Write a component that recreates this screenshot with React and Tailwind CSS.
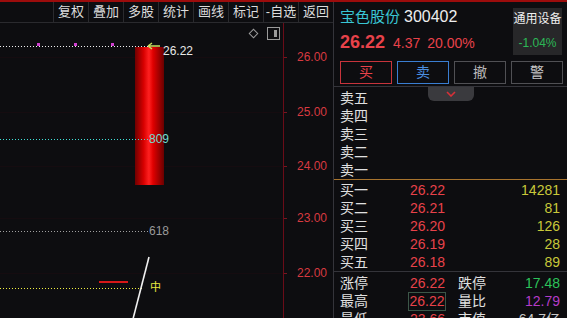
import React from 'react';

const tools = ['复权', '叠加', '多股', '统计', '画线', '标记', '-自选', '返回'];

const axis = [
    { label: '26.00', y: 34 },
    { label: '25.00', y: 89 },
    { label: '24.00', y: 143 },
    { label: '23.00', y: 195 },
    { label: '22.00', y: 250 },
];

const asks = ['卖五', '卖四', '卖三', '卖二', '卖一'];

const bids = [
    { label: '买一', price: '26.22', vol: '14281' },
    { label: '买二', price: '26.21', vol: '81' },
    { label: '买三', price: '26.20', vol: '126' },
    { label: '买四', price: '26.19', vol: '28' },
    { label: '买五', price: '26.18', vol: '89' },
];

const Chart = () => (
    <div className="relative flex-1 overflow-hidden">
        {axis.map((a) => (
            <React.Fragment key={a.label}>
                <div className="absolute left-0 w-[283px] h-px bg-[#150c10]" style={{ top: a.y }} />
                <div className="absolute left-[283px] w-[4px] h-px bg-[#7a1520]" style={{ top: a.y }} />
                <div className="absolute left-[297px] text-[12px] leading-[14px] text-[#d83a40]" style={{ top: a.y - 7 }}>
                    {a.label}
                </div>
            </React.Fragment>
        ))}
        <div className="absolute left-[283px] top-0 bottom-0 w-px bg-[#6a0c18]" />

        {/* tool icons */}
        <div className="absolute left-[250px] top-[7px] w-[7px] h-[7px] border border-[#9a9a9a] rotate-45" />
        <div className="absolute left-[267px] top-[4px] w-[13px] h-[13px] border border-[#9a9a9a] flex justify-end p-[2px]">
            <div className="w-[3px] h-full bg-[#9a9a9a]" />
        </div>

        {/* 26.22 level */}
        <div className="absolute left-0 top-[23px] w-[148px] h-px bg-[repeating-linear-gradient(to_right,#f0f0f0_0_1px,transparent_1px_3px)]" />
        {[37, 74, 111].map((x) => (
            <div key={x} className="absolute top-[20px] w-[3px] h-[3px] bg-[#d040d0]" style={{ left: x }} />
        ))}
        <div className="absolute left-[135px] top-[24px] w-[29px] h-[138px] bg-[linear-gradient(to_right,#700000,#d80000_30%,#ff2020_48%,#e00000_62%,#6a0000)]" />
        <svg className="absolute left-[147px] top-[19px]" width="14" height="8" viewBox="0 0 14 8">
            <path d="M1 4 L5 1 M1 4 L5 7 M1 4 H13" stroke="#c8e060" strokeWidth="1.4" fill="none" />
        </svg>
        <div className="absolute left-[163px] top-[21px] text-[12px] leading-[14px] text-[#e8e8e8]">26.22</div>

        {/* 809 */}
        <div className="absolute left-0 top-[116px] w-[148px] h-px bg-[repeating-linear-gradient(to_right,#40e0d8_0_1px,transparent_1px_3px)]" />
        <div className="absolute left-[149px] top-[109px] text-[12px] leading-[14px] text-[#70dcd0]">809</div>

        {/* 618 */}
        <div className="absolute left-0 top-[208px] w-[148px] h-px bg-[repeating-linear-gradient(to_right,#a0a0a0_0_1px,transparent_1px_3px)]" />
        <div className="absolute left-[149px] top-[201px] text-[12px] leading-[14px] text-[#9a9a9a]">618</div>

        {/* mid */}
        <div className="absolute left-[99px] top-[258px] w-[29px] h-[2px] bg-[#d81818]" />
        <div className="absolute left-0 top-[265px] w-[142px] h-px bg-[repeating-linear-gradient(to_right,#f0f040_0_1px,transparent_1px_3px)]" />
        <div className="absolute left-[150px] top-[257px] text-[11px] leading-[14px] text-[#e8e840]">中</div>
        <svg className="absolute left-0 top-0" width="283" height="295">
            <line x1="149" y1="234" x2="133" y2="296" stroke="#f0f0f0" strokeWidth="1.6" />
        </svg>
    </div>
);

const Row = ({ children, className = '' }) => (
    <div className={`flex items-center h-[18px] leading-[18px] ${className}`}>{children}</div>
);

const App = () => {
    return (
        <div
            className="w-[567px] h-[318px] bg-[#0d0d10] flex flex-col overflow-hidden text-[#e0e0e0]"
            style={{ fontFamily: '"Liberation Sans", "Noto Sans CJK SC", sans-serif' }}
        >
            <div className="h-[2px] bg-[#9c0c0c]" />
            <div className="flex flex-1 min-h-0">
                <div className="w-[333px] flex flex-col">
                    <div className="h-[21px] flex justify-end border-b border-[#2a2a2e]">
                        {tools.map((t) => (
                            <div key={t} className="w-[35px] flex items-center justify-center border-l border-[#2a2a2e] text-[13px] text-[#dcdcdc]">
                                {t}
                            </div>
                        ))}
                    </div>
                    <Chart />
                </div>

                <div className="relative flex-1 flex flex-col border-l border-[#34343a]">
                    <div className="pt-[3px] pb-[2px] border-b border-[#34343a]">
                        <div className="flex h-[50px]">
                            <div className="flex-1 pl-[6px]">
                                <div className="h-[24px] leading-[24px] flex items-baseline gap-[4px]">
                                    <span className="text-[15px] text-[#3ac6d4]">宝色股份</span>
                                    <span className="text-[16px] text-[#eeeeee]">300402</span>
                                </div>
                                <div className="h-[26px] leading-[26px] flex items-baseline text-[#e8424a]">
                                    <span className="text-[18px] font-bold">26.22</span>
                                    <span className="text-[14px] ml-[8px]">4.37</span>
                                    <span className="text-[14px] ml-[7px]">20.00%</span>
                                </div>
                            </div>
                            <div className="mt-[3px] mr-[5px] w-[49px] h-[47px] bg-[#272729] flex flex-col items-center">
                                <div className="text-[12px] leading-[14px] mt-[4px] text-[#f0f0f0]">通用设备</div>
                                <div className="text-[12px] leading-[14px] mt-[10px] text-[#2cb856]">-1.04%</div>
                            </div>
                        </div>
                        <div className="flex gap-[5px] mt-[6px] pl-[6px]">
                            <div className="w-[52px] h-[23px] border border-[#c8343c] text-[#e8424a] text-[14px] flex items-center justify-center">买</div>
                            <div className="w-[52px] h-[23px] border border-[#3a7ed2] text-[#4a8ee0] text-[14px] flex items-center justify-center">卖</div>
                            <div className="w-[52px] h-[23px] border border-[#505054] text-[#b8b8b8] text-[14px] flex items-center justify-center">撤</div>
                            <div className="w-[52px] h-[23px] border border-[#505054] text-[#c8c8c8] text-[14px] flex items-center justify-center">警</div>
                        </div>
                    </div>
                    <div className="absolute left-[94px] top-[85px] w-[46px] h-[14px] rounded-b-[6px] bg-[#3a3a3e] flex items-center justify-center">
                        <svg width="10" height="6" viewBox="0 0 10 6">
                            <path d="M1 1 L5 5 L9 1" stroke="#d83038" strokeWidth="1.6" fill="none" />
                        </svg>
                    </div>

                    <div className="pt-[2px] pl-[6px] pr-[7px] border-b border-[#a8742e] text-[14px]">
                        {asks.map((a) => (
                            <Row key={a}>{a}</Row>
                        ))}
                    </div>

                    <div className="pt-[1px] pl-[6px] pr-[7px] border-b border-[#34343a] text-[14px]">
                        {bids.map((b) => (
                            <Row key={b.label}>
                                <span className="w-[70px]">{b.label}</span>
                                <span className="text-[#e8424a]">{b.price}</span>
                                <span className="ml-auto text-[#c8c83a]">{b.vol}</span>
                            </Row>
                        ))}
                    </div>

                    <div className="pt-[2px] pl-[6px] pr-[7px] text-[14px]">
                        <Row>
                            <span className="w-[70px]">涨停</span>
                            <span className="w-[48px] text-[#e8424a]">26.22</span>
                            <span>跌停</span>
                            <span className="ml-auto text-[#2cc25a]">17.48</span>
                        </Row>
                        <Row>
                            <span className="w-[68px]">最高</span>
                            <span className="w-[38px] h-[19px] border border-[#3c5648] text-[#e8424a] flex items-center justify-center">26.22</span>
                            <span className="ml-[12px]">量比</span>
                            <span className="ml-auto text-[#b43cc8]">12.79</span>
                        </Row>
                        <Row>
                            <span className="w-[70px]">最低</span>
                            <span className="w-[48px] text-[#e8424a]">23.66</span>
                            <span>市值</span>
                            <span className="ml-auto text-[#c8c8c8]">64.7亿</span>
                        </Row>
                    </div>
                </div>
            </div>
        </div>
    );
};

export default App;
